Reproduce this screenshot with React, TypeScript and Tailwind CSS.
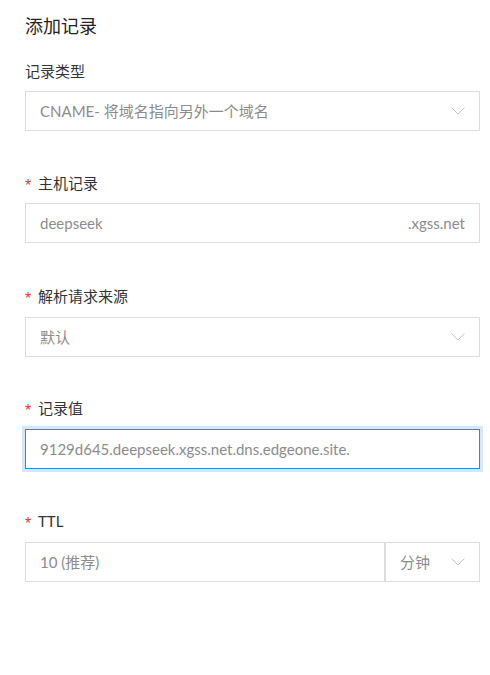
import React from "react";

const font = { fontFamily: '"Lato", "Noto Sans CJK SC", sans-serif' };

function Chevron() {
  return (
    <svg width="14" height="8" viewBox="0 0 14 8" className="shrink-0">
      <path d="M0.5 0.5 L7 7 L13.5 0.5" fill="none" stroke="#c4c4c4" strokeWidth="1" />
    </svg>
  );
}

function Label({ text, required }: { text: string; required?: boolean }) {
  return (
    <div className="flex items-center h-[20px] text-[15px] leading-[20px] text-[#333]">
      {required && (
        <span
          className="relative top-[3px] w-[13px] text-[#e53935] text-[16px] leading-[20px]"
          style={{ fontFamily: '"Liberation Sans", sans-serif' }}
        >
          *
        </span>
      )}
      <span>{text}</span>
    </div>
  );
}

export default function App() {
  return (
    <div className="w-[490px] h-[675px] bg-white px-[25px] pt-[14px]" style={font}>
      <div className="h-[24px] leading-[24px] text-[18px] text-[#222]">添加记录</div>

      <div className="mt-[23px]">
        <Label text="记录类型" />
        <div className="mt-[10px] h-[40px] w-[455px] border border-[#dcdcdc] flex items-center pl-[14px] pr-[14px] text-[15px] text-[#8c8c8c]">
          <span className="flex-1">CNAME- 将域名指向另外一个域名</span>
          <Chevron />
        </div>
      </div>

      <div className="mt-[42px]">
        <Label text="主机记录" required />
        <div className="mt-[10px] h-[40px] w-[455px] border border-[#dcdcdc] flex items-center pl-[14px] pr-[14px] text-[15px] text-[#8c8c8c]">
          <span className="flex-1">deepseek</span>
          <span>.xgss.net</span>
        </div>
      </div>

      <div className="mt-[43px]">
        <Label text="解析请求来源" required />
        <div className="mt-[11px] h-[40px] w-[455px] border border-[#dcdcdc] flex items-center pl-[14px] pr-[14px] text-[15px] text-[#8c8c8c]">
          <span className="flex-1">默认</span>
          <Chevron />
        </div>
      </div>

      <div className="mt-[41px]">
        <Label text="记录值" required />
        <div className="mt-[11px] h-[40px] w-[455px] border border-[#2b89d9] shadow-[0_0_0_3px_#d7e7f6] flex items-center pl-[14px] pr-[14px] text-[15px] text-[#8c8c8c]">
          <span className="flex-1">9129d645.deepseek.xgss.net.dns.edgeone.site.</span>
        </div>
      </div>

      <div className="mt-[42px]">
        <Label text="TTL" required />
        <div className="mt-[11px] h-[40px] w-[455px] border border-[#dcdcdc] flex text-[15px] text-[#8c8c8c]">
          <div className="w-[360px] border-r-[2px] border-[#dcdcdc] flex items-center pl-[14px]">10 (推荐)</div>
          <div className="flex-1 flex items-center pl-[14px] pr-[14px]">
            <span className="flex-1">分钟</span>
            <Chevron />
          </div>
        </div>
      </div>
    </div>
  );
}
